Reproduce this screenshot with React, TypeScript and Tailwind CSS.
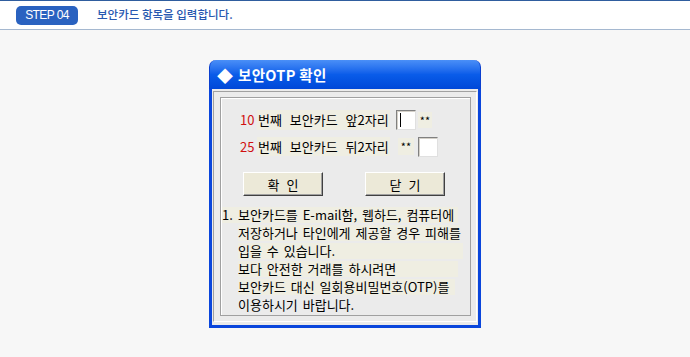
const ko = { fontFamily: '"Noto Sans CJK KR", "Noto Sans", sans-serif' }

function SunkenInput({ caret }: { caret?: boolean }) {
	return (
		<div className="w-[20px] h-[20px] bg-white border border-t-[#808080] border-l-[#808080] border-r-[#e0e0e0] border-b-[#e0e0e0] shadow-[inset_1px_1px_0_#d4d0c8] flex items-center pl-[3px]">
			{caret && <div className="w-px h-[14px] bg-black" />}
		</div>
	)
}

function Button({ label }: { label: string }) {
	return (
		<button className="w-[80px] h-[24px] bg-[#ece9d8] border border-t-white border-l-white border-r-[#404040] border-b-[#404040] shadow-[inset_-1px_-1px_0_#a0a0a0] text-[13px] leading-none text-black [word-spacing:4px]">
			{label}
		</button>
	)
}

export default function App() {
	return (
		<div className="min-h-[357px] bg-[#f7f7f7]" style={ko}>
			<div className="h-[30px] bg-white border-t border-[#2f5d9e] border-b border-b-[#a5b8d0] flex items-center">
				<div className="ml-[16px] w-[62px] h-[19px] rounded-[5px] bg-[#2a62c0] flex items-center justify-center text-white text-[12px] tracking-[-0.6px]" style={{ fontFamily: '"Liberation Sans", Arial, sans-serif' }}>
					STEP 04
				</div>
				<div className="ml-[19px] text-[11.5px] text-[#2858b0] font-medium">보안카드 항목을 입력합니다.</div>
			</div>

			<div className="mx-auto mt-[30px] w-[272px]">
				<div className="h-[29px] rounded-t-[7px] bg-gradient-to-b from-[#4a8ff7] via-[#0a5ce9] to-[#0048d8] border-x border-[#0a3fcf] flex items-center pl-[7px] text-white">
					<span className="text-[16px] leading-none">◆</span>
					<span className="ml-[5px] text-[14.5px] font-bold tracking-[0.3px]">보안OTP 확인</span>
				</div>
				<div className="border-x-[3px] border-b-[3px] border-[#0a46dc] bg-[#ebebeb] px-[1px] pt-[2px] pb-[3px]">
					<div className="border border-t-[#a0a0a0] border-l-[#a0a0a0] border-r-white border-b-white pl-[6px] pr-[5px] pt-[5px] pb-[5px]">
						<div className="border border-[#a0a0a0] shadow-[inset_1px_1px_0_#fff] pt-[12px] pb-[2px] text-[13px] text-black [word-spacing:5px]">
							<div className="flex items-center h-[20px] pl-[19px]">
								<div className="w-[151px] flex items-center whitespace-nowrap">
									<span className="text-[#d01010] w-[17px]">10</span>
									<span className="bg-[#efeee2] px-px">번째 보안카드 앞2자리</span>
								</div>
								<div className="ml-[5px]">
									<SunkenInput caret />
								</div>
								<span className="ml-[2px] w-[14px] bg-[#efeee2] text-center text-[11px]">**</span>
							</div>
							<div className="flex items-center h-[21px] pl-[19px] mt-[6px]">
								<div className="w-[151px] flex items-center whitespace-nowrap">
									<span className="text-[#d01010] w-[17px]">25</span>
									<span className="bg-[#efeee2] px-px">번째 보안카드 뒤2자리</span>
								</div>
								<span className="ml-[7px] w-[16px] bg-[#efeee2] text-center text-[11px]">**</span>
								<div className="ml-[4px]">
									<SunkenInput />
								</div>
							</div>
							<div className="flex mt-[15px] pl-[22px] gap-[42px]">
								<Button label="확 인" />
								<Button label="닫 기" />
							</div>
							<div className="mt-[11px] pl-px flex flex-col gap-[2px] leading-[16px] [word-spacing:2px] whitespace-nowrap">
								<div className="w-[236px] bg-[#efeee2] flex">
									<span className="w-[16px]">1.</span>
									<span>보안카드를 E-mail함, 웹하드, 컴퓨터에</span>
								</div>
								<div className="ml-[16px] w-[222px] bg-[#efeee2]">저장하거나 타인에게 제공할 경우 피해를</div>
								<div className="ml-[16px] w-[225px] bg-[#efeee2]">입을 수 있습니다.</div>
								<div className="ml-[16px] w-[220px] bg-[#efeee2]">보다 안전한 거래를 하시려면</div>
								<div className="ml-[16px] w-[217px] bg-[#efeee2]">보안카드 대신 일회용비밀번호(OTP)를</div>
								<div className="ml-[16px]">이용하시기 바랍니다.</div>
							</div>
						</div>
					</div>
				</div>
			</div>
		</div>
	)
}
